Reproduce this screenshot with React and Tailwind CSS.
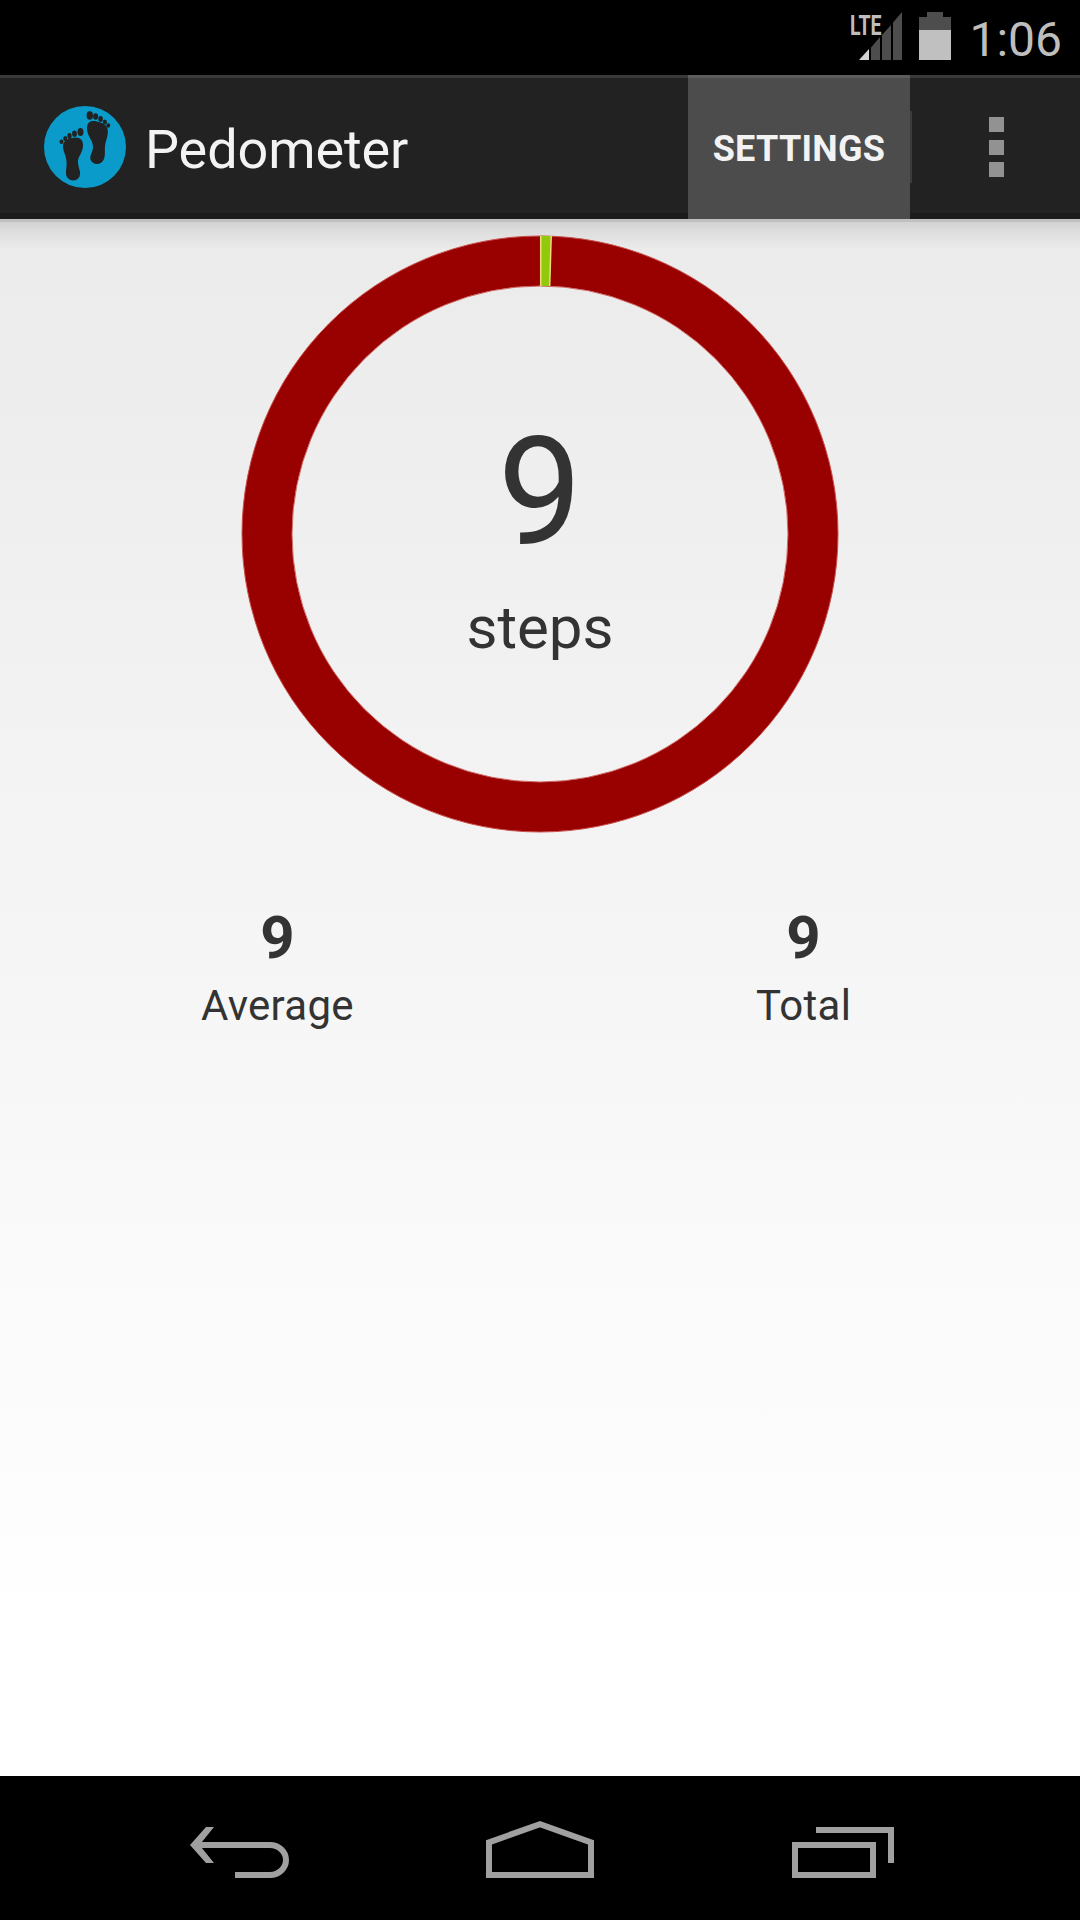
import React from 'react';

const SignalIcon = () => (
    <svg width="56" height="52" viewBox="848 10 56 52">
        <path d="M859 60L869 49V60Z" fill="#d4d4d4" />
        <path d="M871 60V47.500L880 37V60ZM882 60V35L891 25V60ZM893 60V22.500L902 12V60Z" fill="#4d4d4d" />
        <text
            x="850"
            y="35"
            textLength="31.500"
            lengthAdjust="spacingAndGlyphs"
            fontFamily="Roboto"
            fontWeight="700"
            fontSize="28"
            fill="#bebebe"
        >
            LTE
        </text>
    </svg>
);

const BatteryIcon = () => (
    <svg width="32" height="48" viewBox="0 0 32 48">
        <path d="M8 0H24V5H32V18H0V5H8Z" fill="#4d4d4d" />
        <path d="M0 18H32V48H0Z" fill="#c0c0c0" />
    </svg>
);

const LogoIcon = () => (
    <svg width="84" height="84" viewBox="0 0 84 84">
        <circle cx="42" cy="42" r="41" fill="#0a9bcb" />
        <g fill="#222">
            <path d="M20.500 45C18.500 37 22.500 34 29 33C36 31 40.500 34 40 41C39.500 49 34.500 51 35 58C35.500 64 38.500 67 36.500 71.500C34 77 25 77 23.200 70C22.500 65 24 62 23.500 56C23 51 21.500 49 20.500 45Z" />
            <ellipse cx="37.500" cy="27" rx="3" ry="4" />
            <ellipse cx="31.500" cy="28.800" rx="2.400" ry="3.200" />
            <ellipse cx="26.500" cy="31" rx="2.200" ry="2.900" />
            <ellipse cx="22.200" cy="33.600" rx="2" ry="2.500" />
            <ellipse cx="18.500" cy="36.800" rx="2" ry="2.300" />
            <path d="M44 24C43.500 17 48 15 54 16.500C61 18 65.500 21 64.800 28C64.500 33 62.500 36 62 41C61.500 46 62.500 49 61 54C58.500 60.500 49.500 60.500 47.500 54.500C46.500 50 50 47 50 42C50 35 44.500 32 44 24Z" />
            <ellipse cx="46.800" cy="10.500" rx="3.200" ry="4.200" />
            <ellipse cx="52.600" cy="11.500" rx="2.500" ry="3.200" />
            <ellipse cx="57.600" cy="14" rx="2.300" ry="2.900" />
            <ellipse cx="61.800" cy="17" rx="2.100" ry="2.600" />
            <ellipse cx="65.200" cy="20.500" rx="2" ry="2.300" />
        </g>
    </svg>
);

const StepsRing = () => (
    <svg className="block" width="600" height="600" viewBox="-300 -300 600 600">
        <circle r="273" fill="none" stroke="#990000" strokeWidth="50" />
        <circle r="298" fill="none" stroke="#c8504c" strokeWidth="1" />
        <circle r="248" fill="none" stroke="#d06864" strokeWidth="1" />
        <path d="M0.500 -298.200L11.300 -298L9.800 -248L0.500 -248Z" fill="#92c90c" />
        <path d="M0.700 -298V-248M11.200 -298L9.700 -248" stroke="#f0dc78" strokeWidth="1.500" />
    </svg>
);

const StatusBar = () => (
    <div className="flex h-[75px] items-start justify-end bg-black pr-[18px]">
        <div className="mr-[15px] mt-[10px]"><SignalIcon /></div>
        <div className="mr-[18px] mt-[12px]"><BatteryIcon /></div>
        <span className="mt-[12px] text-[48px] leading-[56px] text-[#bebebe]">1:06</span>
    </div>
);

const ActionBar = () => (
    <header className="flex h-[144px] border-b-[6px] border-[#1b1b1b] bg-[#222]">
        <div className="flex h-[138px] flex-1 items-center border-t-[3px] border-[#3a3a3a] pl-[43px]">
            <div className="pt-[3px]"><LogoIcon /></div>
            <h1 className="ml-[18px] pt-[8px] text-[54px] leading-[64px] tracking-[-0.1px] text-[#f3f3f3]">Pedometer</h1>
        </div>
        <button type="button" className="h-[144px] w-[222px] border-t-[3px] border-[#5c5c5c] bg-[#4c4c4c] text-[36px] font-bold tracking-[0.3px] text-[#f3f3f3]">
            SETTINGS
        </button>
        <div className="flex h-[138px] w-[170px] items-center border-t-[3px] border-[#3a3a3a]">
            <span className="mt-[3px] h-[72px] w-[2px] bg-[#3b3b3b]" />
            <button type="button" aria-label="More options" className="ml-[77px] mt-[3px] flex flex-col gap-[7.5px]">
                <span className="size-[15px] bg-[#929292]" />
                <span className="size-[15px] bg-[#929292]" />
                <span className="size-[15px] bg-[#929292]" />
            </button>
        </div>
    </header>
);

const Stat = ({ value, label }) => (
    <div className="flex flex-col items-center">
        <span className="text-[60px] font-bold leading-[70px]">{value}</span>
        <span className="mt-[8px] text-[42px] leading-[50px] tracking-[0.3px]">{label}</span>
    </div>
);

const NavBar = () => (
    <nav className="flex h-[144px] bg-black pl-[190px] pt-[45px]">
        <svg width="100" height="60" viewBox="190 1821 100 60" fill="none" stroke="#a0a0a0" strokeWidth="6">
            <path d="M196 1845H270C279 1845 286 1852 286 1860C286 1868 279 1875 270 1875H235" />
            <path d="M206 1827H214L199.500 1845L214 1863H206L190 1845Z" fill="#a0a0a0" stroke="none" />
        </svg>
        <svg className="ml-[196px]" width="108" height="60" viewBox="486 1821 108 60" fill="none" stroke="#a0a0a0" strokeWidth="6">
            <path d="M489 1875V1842.300L540 1824.200L591 1842.300V1875Z" />
        </svg>
        <svg className="ml-[198px]" width="102" height="60" viewBox="792 1821 102 60" fill="none" stroke="#a0a0a0" strokeWidth="6">
            <path d="M795 1845H873V1875H795Z" />
            <path d="M816 1830H891V1863" />
        </svg>
    </nav>
);

export default function App() {
    return (
        <div className="flex h-[1920px] w-[1080px] flex-col overflow-hidden font-[Roboto,sans-serif]">
            <StatusBar />
            <ActionBar />
            <main className="flex flex-1 flex-col bg-[linear-gradient(#ebebeb,#fff_91%)] text-[#333]">
                <div className="h-[30px] bg-[linear-gradient(#c0c0c0_3px,#d2d2d2_3px,#dedede_13px,#ebebeb)]" />
                <div className="-mt-[15px] grid justify-center">
                    <div className="col-start-1 row-start-1"><StepsRing /></div>
                    <div className="col-start-1 row-start-1 flex flex-col items-center pt-[171px]">
                        <span className="text-[150px] leading-[176px]">9</span>
                        <span className="mt-[12px] text-[60px] leading-[70px]">steps</span>
                    </div>
                </div>
                <div className="flex gap-[402px] pl-[201px] pt-[69px]">
                    <Stat value={9} label="Average" />
                    <Stat value={9} label="Total" />
                </div>
            </main>
            <NavBar />
        </div>
    );
}
